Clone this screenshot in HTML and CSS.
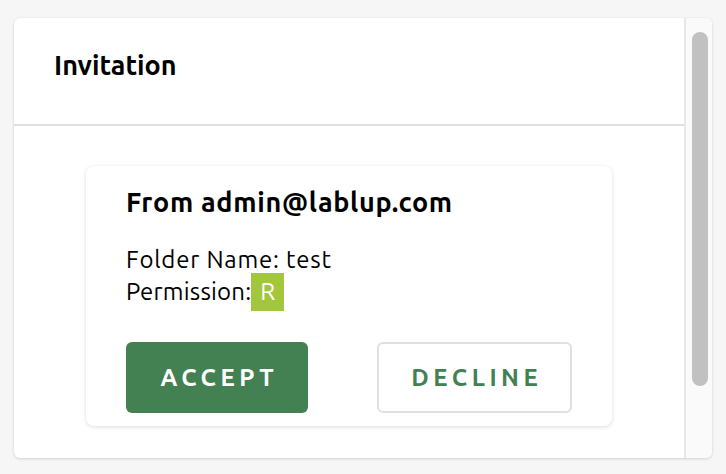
FILE: index.html
```html
<!DOCTYPE html>
<html>
<head>
<meta charset="utf-8">
<link rel="stylesheet" href="styles.css">
</head>
<body>
<div class="dialog">
  <div class="main">
    <div class="header"><h2 class="title">Invitation</h2></div>
    <div class="content">
      <div class="card">
        <h3 class="from">From admin@lablup.com</h3>
        <div class="info">
          <div>Folder Name: test</div>
          <div><span class="label">Permission:</span><span class="badge">R</span></div>
        </div>
        <div class="actions">
          <button class="btn accept">ACCEPT</button>
          <button class="btn decline">DECLINE</button>
        </div>
      </div>
    </div>
  </div>
  <div class="scroll">
    <div class="thumb"></div>
  </div>
</div>
</body>
</html>
```
FILE: styles.css
```css
html, body {
  margin: 0;
  padding: 0;
  background: #f6f6f6;
  font-family: "Ubuntu", "Noto Sans", "Open Sans", sans-serif;
  color: #000;
}
body {
  padding: 18px 14px 14px 14px;
}
.dialog {
  width: 698px;
  height: 440px;
  background: #fff;
  border-radius: 6px;
  box-shadow: 0 1px 3px rgba(0,0,0,0.15), 0 0 1px rgba(0,0,0,0.08);
  display: flex;
  overflow: hidden;
}
.main {
  flex: 1;
  display: flex;
  flex-direction: column;
}
.header {
  height: 108px;
  border-bottom: 2px solid #e0e0e0;
  padding: 31px 0 0 40px;
  box-sizing: border-box;
}
.title {
  margin: 0;
  font-size: 27px;
  line-height: 32px;
  font-weight: 700;
}
.content {
  padding: 40px 0 0 72px;
}
.card {
  width: 526px;
  height: 260px;
  box-sizing: border-box;
  border-radius: 8px;
  box-shadow: 0 1px 4px rgba(0,0,0,0.14);
  padding: 20px 40px 0 40px;
}
.from {
  margin: 0;
  font-size: 27px;
  line-height: 32px;
  font-weight: 700;
  letter-spacing: 0.7px;
}
.info {
  margin-top: 26px;
  font-size: 24px;
  line-height: 32px;
  letter-spacing: 0.8px;
}
.label {
  letter-spacing: 0.2px;
}
.badge {
  background: #a3c73c;
  color: #fff;
  padding: 5px 9px 6px 9px;
  letter-spacing: 0;
}
.actions {
  margin-top: 34px;
  display: flex;
  gap: 69px;
}
.btn {
  font-family: inherit;
  font-size: 24px;
  font-weight: 600;
  letter-spacing: 4.5px;
  text-indent: 4.5px;
  height: 71px;
  border-radius: 6px;
  cursor: pointer;
  padding: 0;
}
.accept {
  width: 182px;
  background: #438153;
  color: #fff;
  border: none;
}
.decline {
  width: 195px;
  background: #fff;
  color: #438153;
  border: 2px solid #e0e0e0;
}
.scroll {
  width: 28px;
  background: #fafafa;
  border-left: 2px solid #e8e8e8;
  padding: 14px 0 0 6px;
  box-sizing: border-box;
}
.thumb {
  width: 16px;
  height: 354px;
  background: #c1c1c1;
  border-radius: 8px;
}
```
